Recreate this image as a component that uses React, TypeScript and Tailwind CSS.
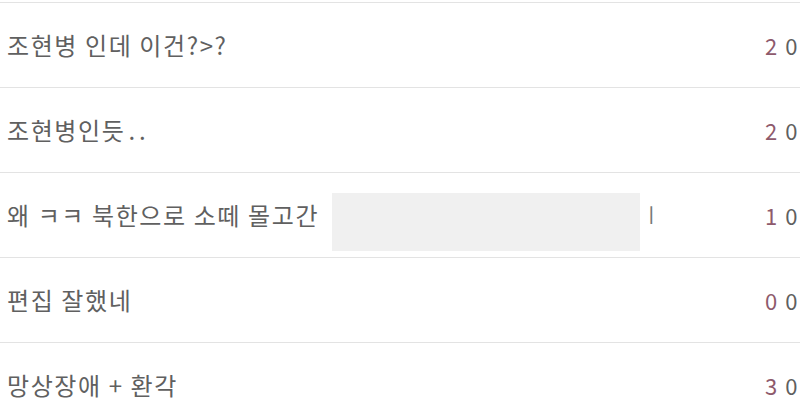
import React from "react";

type Comment = {
  text: string;
  tail?: string;
  up: number;
  down: number;
  hidden?: boolean;
};

const comments: Comment[] = [
  { text: "조현병 인데 이건?>?", up: 2, down: 0 },
  { text: "조현병인듯", tail: "..", up: 2, down: 0 },
  { text: "왜 ㅋㅋ 북한으로 소떼 몰고간", up: 1, down: 0, hidden: true },
  { text: "편집 잘했네", up: 0, down: 0 },
  { text: "망상장애 + 환각", up: 3, down: 0 },
];

const font = {
  fontFamily: '"Noto Sans CJK KR", "Liberation Sans", sans-serif',
};

const CommentRow = ({ item }: { item: Comment }) => (
  <div className="flex h-[85px] items-center border-t border-[#e3e3e3] pl-[7px]">
    <span className="text-[24px] leading-none tracking-[1.6px] text-[#606060]">
      {item.text}
      {item.tail && <span className="ml-[3px] tracking-[4px]">{item.tail}</span>}
    </span>
    {item.hidden && (
      <div className="ml-[13px] flex h-full items-center">
        <div className="mt-[14px] h-[58px] w-[308px] bg-[#f0f0f0]" />
        <span className="ml-[2px] text-[20px] leading-none text-[#777]">ㅣ</span>
      </div>
    )}
    <div className="ml-auto mr-[-12px] flex w-[47px] gap-[8px] text-[22px] leading-none">
      <span className="text-[#8e5a6c]">{item.up}</span>
      <span className="text-[#5f5f5f]">{item.down}</span>
    </div>
  </div>
);

export default function App() {
  return (
    <div className="h-[416px] w-[800px] overflow-hidden bg-white pt-[2px]" style={font}>
      {comments.map((c, i) => (
        <CommentRow key={i} item={c} />
      ))}
    </div>
  );
}
